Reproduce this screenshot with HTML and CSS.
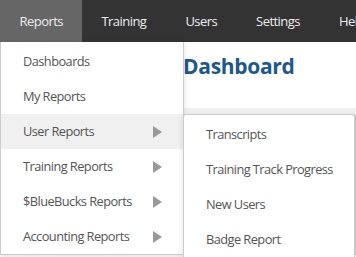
FILE: index.html
```html
<!DOCTYPE html>
<html lang="en">
<head>
    <meta charset="UTF-8">
    <link rel="stylesheet" href="styles.css">
    <title>Dashboard</title>
</head>
<body>
    <div class="navbar">
        <div class="nav-item active">Reports</div>
        <div class="nav-item">Training</div>
        <div class="nav-item">Users</div>
        <div class="nav-item">Settings</div>
        <div class="nav-item">Help</div>
    </div>

    <div class="page">
        <h1>Dashboard</h1>
        <div class="band"></div>
        <div class="card"></div>
    </div>

    <div class="dropdown">
        <div class="menu-item">Dashboards</div>
        <div class="menu-item">My Reports</div>
        <div class="menu-item open">User Reports <span class="arrow"></span></div>
        <div class="menu-item">Training Reports <span class="arrow"></span></div>
        <div class="menu-item">$BlueBucks Reports <span class="arrow"></span></div>
        <div class="menu-item">Accounting Reports <span class="arrow"></span></div>
    </div>

    <div class="submenu">
        <div class="menu-item">Transcripts</div>
        <div class="menu-item">Training Track Progress</div>
        <div class="menu-item">New Users</div>
        <div class="menu-item">Badge Report</div>
    </div>
</body>
</html>
```

FILE: styles.css
```css
body {
    font-family: 'Open Sans', 'Noto Sans', sans-serif;
    margin: 0;
    padding: 0;
    background-color: #fff;
    position: relative;
    height: 257px;
    overflow: hidden;
}

.navbar {
    display: flex;
    height: 42px;
    background-color: #333;
    white-space: nowrap;
    overflow: hidden;
}

.nav-item {
    display: flex;
    align-items: center;
    padding: 0 19.5px;
    color: #eee;
    font-size: 13px;
    letter-spacing: -0.55px;
}

.nav-item.active {
    background-color: #666;
    width: 43px;
}

.page {
    padding-left: 183px;
}

.page h1 {
    margin: 0;
    padding-top: 10px;
    height: 56px;
    font-size: 21px;
    font-weight: bold;
    color: #1b5791;
    letter-spacing: -0.3px;
}

.band {
    height: 6px;
    background-color: #f0f0f0;
}

.card {
    height: 140px;
    border: 1px solid #ccc;
    border-left: 2px solid #1b5791;
    border-bottom: none;
    border-radius: 3px 3px 0 0;
    background-color: #fff;
}

.dropdown {
    position: absolute;
    top: 42px;
    left: 0;
    width: 182px;
    padding-top: 2px;
    background-color: #fff;
    border: 1px solid #ccc;
    border-top: none;
    box-shadow: 0 2px 6px rgba(0, 0, 0, 0.12);
}

.menu-item {
    position: relative;
    height: 35px;
    line-height: 35px;
    padding-left: 22px;
    font-size: 12.8px;
    color: #555;
    letter-spacing: -0.55px;
    white-space: nowrap;
}

.menu-item.open {
    background-color: #f0f0f0;
}

.arrow {
    position: absolute;
    left: 152px;
    top: 12px;
    width: 0;
    height: 0;
    border-top: 6px solid transparent;
    border-bottom: 6px solid transparent;
    border-left: 9px solid #999;
}

.submenu {
    position: absolute;
    top: 114px;
    left: 183px;
    width: 170px;
    height: 140px;
    padding-top: 2px;
    background-color: #fff;
    border: 1px solid #ccc;
    border-bottom: none;
    border-radius: 3px 3px 0 0;
    box-shadow: 0 2px 6px rgba(0, 0, 0, 0.12);
}
```
